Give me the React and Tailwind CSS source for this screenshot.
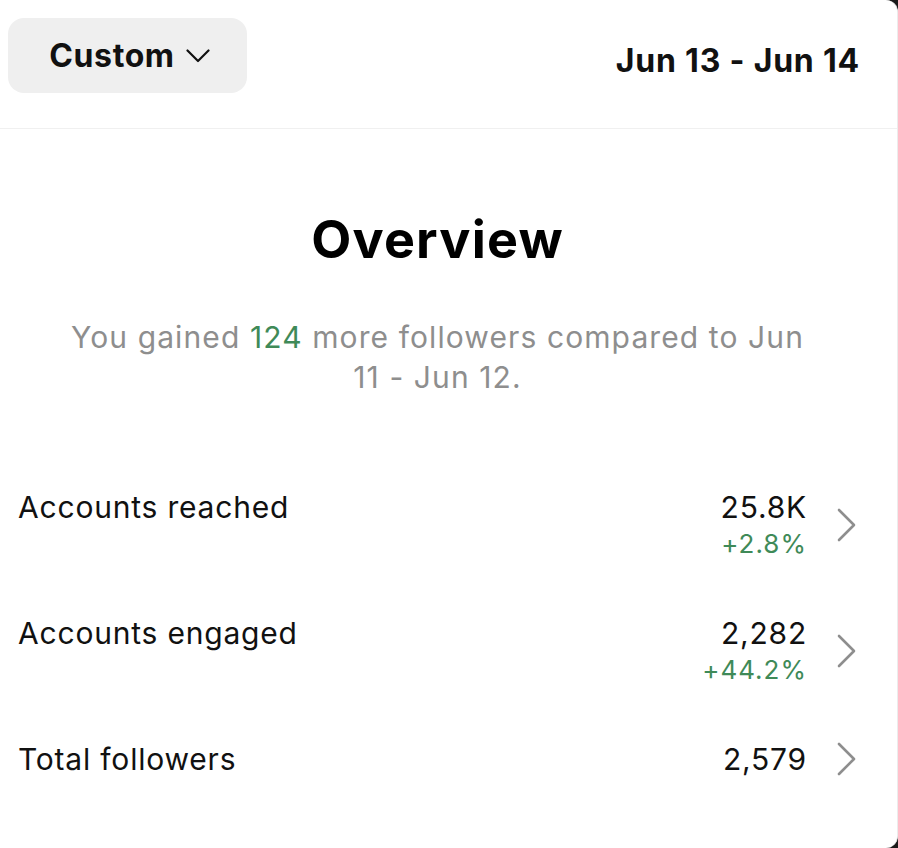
const rows = [
  { label: "Accounts reached", value: "25.8K", change: "+2.8%" },
  { label: "Accounts engaged", value: "2,282", change: "+44.2%" },
  { label: "Total followers", value: "2,579" },
];

function SmallChevron() {
  return (
    <svg width="24" height="14" viewBox="0 0 24 14" fill="none">
      <path d="M1.5 1.5 L12 12 L22.5 1.5" stroke="#111" strokeWidth="2.2" strokeLinecap="round" strokeLinejoin="round" />
    </svg>
  );
}

function RowChevron() {
  return (
    <svg width="20" height="34" viewBox="0 0 20 34" fill="none">
      <path d="M2 2 L17 17 L2 32" stroke="#8e8e8e" strokeWidth="2.6" strokeLinecap="round" strokeLinejoin="round" />
    </svg>
  );
}

export default function App() {
  return (
    <div className="w-[898px] h-[848px] bg-[#1a1a1a]" style={{ fontFamily: "Inter, 'Liberation Sans', sans-serif" }}>
      <div className="w-[898px] h-[848px] bg-white rounded-r-[12px] border-r border-[#ececec] flex flex-col overflow-hidden">
        {/* header */}
        <div className="h-[129px] shrink-0 flex items-start justify-between pl-[8px] pr-[37px] pt-[18px] border-b border-[#f0f0f0]">
          <button className="w-[239px] h-[75px] rounded-[16px] bg-[#efefef] flex items-center justify-center gap-[11px] pl-[4px]">
            <span className="text-[32px] font-bold text-[#111] tracking-[0.6px]">Custom</span>
            <SmallChevron />
          </button>
          <div className="mt-[23px] text-[32px] font-bold text-[#111] leading-[40px] tracking-[0.8px]">Jun 13 - Jun 14</div>
        </div>

        {/* overview */}
        <div className="flex flex-col items-center pt-[82px] pr-[22px]">
          <h1 className="text-[52px] font-bold text-black leading-[58px] tracking-[1.2px]">Overview</h1>
          <p className="mt-[48px] text-center text-[30px] leading-[40px] text-[#8e8e8e] tracking-[1.1px]">
            You gained <span className="text-[#3f8a58]">124</span> more followers compared to Jun
            <br />
            11 - Jun 12.
          </p>
        </div>

        {/* metrics */}
        <div className="flex flex-col gap-[52px] pt-[91px] pl-[18px] pr-[40px]">
          {rows.map((r) => (
            <div key={r.label} className="flex items-start justify-between">
              <div className="text-[30px] leading-[38px] text-[#111] tracking-[0.8px]">{r.label}</div>
              <div className="flex items-center gap-[30px]">
                <div className="flex flex-col items-end">
                  <div className="text-[30px] leading-[38px] text-[#111] tracking-[0.8px]">{r.value}</div>
                  {r.change && <div className="text-[26px] leading-[36px] text-[#3f8a58] tracking-[1px]">{r.change}</div>}
                </div>
                <RowChevron />
              </div>
            </div>
          ))}
        </div>
      </div>
    </div>
  );
}
